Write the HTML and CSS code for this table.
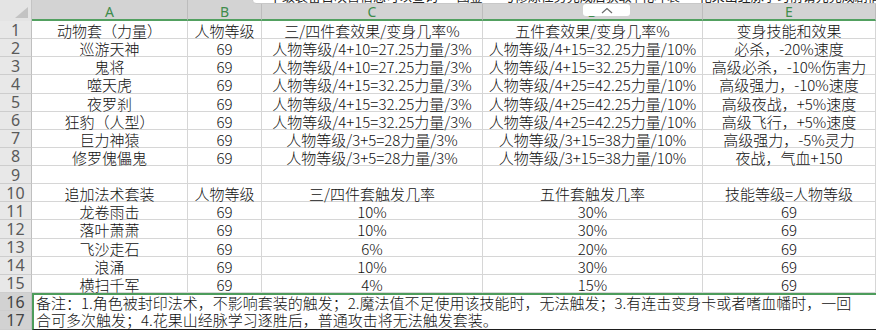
FILE: index.html
```html
<!DOCTYPE html>
<html lang="zh-CN">
<head>
<meta charset="utf-8">
<title>套装效果</title>
<link rel="stylesheet" href="styles.css">
</head>
<body>
<div class="sheet">
  <div class="corner"><svg class="tri" width="14" height="11" viewBox="0 0 14 11"><polygon points="13,0 13,11 0,11" fill="#c3c3c3"/></svg></div>
  <div class="ch">A</div><div class="ch">B</div><div class="ch">C</div><div class="ch">D</div><div class="ch">E</div>

  <div class="rh">1</div><div class="c">动物套（力量）</div><div class="c">人物等级</div><div class="c">三/四件套效果/变身几率%</div><div class="c">五件套效果/变身几率%</div><div class="c">变身技能和效果</div>
  <div class="rh">2</div><div class="c">巡游天神</div><div class="c">69</div><div class="c">人物等级/4+10=27.25力量/3%</div><div class="c">人物等级/4+15=32.25力量/10%</div><div class="c">必杀，-20%速度</div>
  <div class="rh">3</div><div class="c">鬼将</div><div class="c">69</div><div class="c">人物等级/4+10=27.25力量/3%</div><div class="c">人物等级/4+15=32.25力量/10%</div><div class="c">高级必杀，-10%伤害力</div>
  <div class="rh">4</div><div class="c">噬天虎</div><div class="c">69</div><div class="c">人物等级/4+15=32.25力量/3%</div><div class="c">人物等级/4+25=42.25力量/10%</div><div class="c">高级强力，-10%速度</div>
  <div class="rh">5</div><div class="c">夜罗刹</div><div class="c">69</div><div class="c">人物等级/4+15=32.25力量/3%</div><div class="c">人物等级/4+25=42.25力量/10%</div><div class="c">高级夜战，+5%速度</div>
  <div class="rh">6</div><div class="c">狂豹（人型）</div><div class="c">69</div><div class="c">人物等级/4+15=32.25力量/3%</div><div class="c">人物等级/4+25=42.25力量/10%</div><div class="c">高级飞行，+5%速度</div>
  <div class="rh">7</div><div class="c">巨力神猿</div><div class="c">69</div><div class="c">人物等级/3+5=28力量/3%</div><div class="c">人物等级/3+15=38力量/10%</div><div class="c">高级强力，-5%灵力</div>
  <div class="rh">8</div><div class="c">修罗傀儡鬼</div><div class="c">69</div><div class="c">人物等级/3+5=28力量/3%</div><div class="c">人物等级/3+15=38力量/10%</div><div class="c">夜战，气血+150</div>
  <div class="rh">9</div><div class="c"></div><div class="c"></div><div class="c"></div><div class="c"></div><div class="c"></div>
  <div class="rh">10</div><div class="c">追加法术套装</div><div class="c">人物等级</div><div class="c">三/四件套触发几率</div><div class="c">五件套触发几率</div><div class="c">技能等级=人物等级</div>
  <div class="rh">11</div><div class="c">龙卷雨击</div><div class="c">69</div><div class="c">10%</div><div class="c">30%</div><div class="c">69</div>
  <div class="rh">12</div><div class="c">落叶萧萧</div><div class="c">69</div><div class="c">10%</div><div class="c">30%</div><div class="c">69</div>
  <div class="rh">13</div><div class="c">飞沙走石</div><div class="c">69</div><div class="c">6%</div><div class="c">20%</div><div class="c">69</div>
  <div class="rh">14</div><div class="c">浪涌</div><div class="c">69</div><div class="c">10%</div><div class="c">30%</div><div class="c">69</div>
  <div class="rh">15</div><div class="c">横扫千军</div><div class="c">69</div><div class="c">4%</div><div class="c">15%</div><div class="c">69</div>

  <div class="rh sel r16">16</div>
  <div class="note"><p>备注：1.角色被封印法术，不影响套装的触发；2.魔法值不足使用该技能时，无法触发；3.有连击变身卡或者嗜血幡时，一回<br>合可多次触发；4.花果山经脉学习逐胜后，普通攻击将无法触发套装。</p></div>
  <div class="rh sel r17">17</div>
</div>

<div class="topbox">下级装备召唤兽信息可以查询 — 图鉴 · 与修炼任务完成后获取 | 乾坤袋 · 花果山经脉学习前请先完成剧情任务并领取相关奖励套装</div>
<div class="collapse"><svg width="12" height="7" viewBox="0 0 12 7"><polyline points="1,6 6,1.5 11,6" fill="none" stroke="#6b6b6b" stroke-width="1.2"/></svg></div>
</body>
</html>
```

FILE: styles.css
```css
html, body {
  margin: 0;
  padding: 0;
  background: #ffffff;
  overflow: hidden;
}

body {
  width: 876px;
  height: 333px;
  position: relative;
  font-family: "Noto Sans CJK SC", "Noto Sans", sans-serif;
}

.sheet {
  display: grid;
  grid-template-columns: 32px 156px 74px 221px 220px 173px;
  grid-template-rows: 21px repeat(15, 18.13px) 18.5px 19px;
}

.corner {
  background: #e4e4e4;
  border-right: 1px solid #c4c4c4;
  box-sizing: border-box;
  position: relative;
}

.tri {
  position: absolute;
  right: 2px;
  top: 7px;
}

.ch {
  background: #d3d3d3;
  border-right: 1px solid #bcbcbc;
  border-bottom: 2px solid #52a060;
  box-sizing: border-box;
  color: #3f8c4c;
  font-family: "Noto Sans", sans-serif;
  font-size: 14px;
  line-height: 12px;
  padding-top: 4px;
  display: flex;
  justify-content: center;
  align-items: center;
}

.rh {
  background: #e8e8e8;
  border-right: 1px solid #bfbfbf;
  border-bottom: 1px solid #cdcdcd;
  box-sizing: border-box;
  color: #5a5a5a;
  font-family: "Noto Sans", sans-serif;
  font-size: 16px;
  line-height: 15px;
  padding-top: 1px;
  display: flex;
  justify-content: center;
  align-items: center;
}

.rh.sel {
  background: #d2d2d2;
  color: #444;
}

.r16 {
  grid-column: 1;
  grid-row: 17;
}

.r17 {
  grid-column: 1;
  grid-row: 18;
}

.c {
  border-right: 1px solid #d6d6d6;
  border-bottom: 1px solid #d6d6d6;
  box-sizing: border-box;
  color: #111;
  font-size: 15px;
  font-weight: 300;
  line-height: 15px;
  padding-top: 2px;
  display: flex;
  justify-content: center;
  align-items: center;
  white-space: nowrap;
}

.note {
  grid-column: 2 / 7;
  grid-row: 17 / 19;
  border-top: 2px solid #4d9c5b;
  border-left: 2px solid #4d9c5b;
  border-bottom: 1px solid #1e1e1e;
  box-sizing: border-box;
  padding-left: 2px;
  color: #111;
  font-size: 15px;
  font-weight: 300;
  line-height: 17.5px;
  white-space: nowrap;
}

.note p {
  margin: -1px 0 0 0;
}

.topbox {
  position: absolute;
  left: 252px;
  top: -12px;
  width: 650px;
  height: 16px;
  box-sizing: border-box;
  background: #ffffff;
  border: 1px solid #c8c8c8;
  border-radius: 4px;
  padding-left: 16px;
  font-size: 13px;
  line-height: 13px;
  color: #222;
  white-space: nowrap;
  overflow: hidden;
}

.collapse {
  position: absolute;
  left: 583px;
  top: 4px;
  width: 47px;
  height: 12px;
  background: #ffffff;
  border-radius: 3px;
  display: flex;
  justify-content: center;
  align-items: center;
}
```
